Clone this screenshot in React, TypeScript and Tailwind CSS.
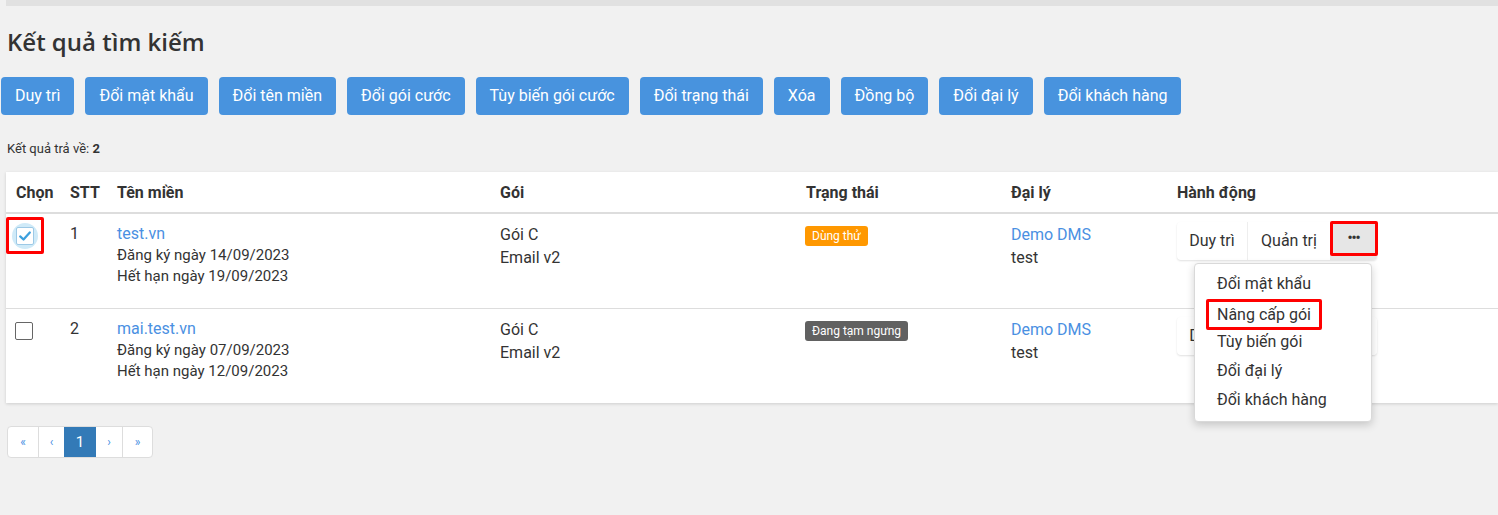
import React from 'react';

const bulkActions = [
  'Duy trì',
  'Đổi mật khẩu',
  'Đổi tên miền',
  'Đổi gói cước',
  'Tùy biến gói cước',
  'Đổi trạng thái',
  'Xóa',
  'Đồng bộ',
  'Đổi đại lý',
  'Đổi khách hàng',
];

const domains = [
  {
    id: 1,
    name: 'test.vn',
    registered: '14/09/2023',
    expires: '19/09/2023',
    status: 'Dùng thử',
    statusClass: 'bg-[#ff9800]',
    checked: true,
  },
  {
    id: 2,
    name: 'mai.test.vn',
    registered: '07/09/2023',
    expires: '12/09/2023',
    status: 'Đang tạm ngưng',
    statusClass: 'bg-[#616161]',
    checked: false,
  },
];

const menuItems = ['Đổi mật khẩu', 'Nâng cấp gói', 'Tùy biến gói', 'Đổi đại lý', 'Đổi khách hàng'];

function CheckBox({ checked }: { checked: boolean }) {
  if (checked) {
    return (
      <span className="relative inline-flex h-[37px] w-[38px] items-center justify-center border-[3px] border-[#ff0000] rounded-[2px] -ml-[9px] -mt-[6px]">
        <span className="flex h-[26px] w-[26px] items-center justify-center rounded-full bg-[#cfeaf8]">
          <span className="flex h-[18px] w-[18px] items-center justify-center rounded-[2px] border border-[#9cc9e6] bg-white">
            <svg viewBox="0 0 16 16" className="h-[14px] w-[14px]">
              <path d="M2.5 8.5 L6.3 12 L13.5 4" fill="none" stroke="#3ca0dd" strokeWidth="2.6" strokeLinecap="round" strokeLinejoin="round" />
            </svg>
          </span>
        </span>
      </span>
    );
  }
  return <span className="mt-[4px] block h-[18px] w-[18px] rounded-[2px] border border-[#666] bg-white" />;
}

function ActionGroup({ open }: { open: boolean }) {
  return (
    <div className="relative inline-flex">
      <div className="flex h-[38px] rounded-[4px] bg-white shadow-[0_1px_2px_rgba(0,0,0,0.12)]">
        <button className="w-[71px] text-[16px] text-[#333] border-r border-[#eee]">Duy trì</button>
        <button className="w-[82px] text-[16px] text-[#333]">Quản trị</button>
        <button
          className={`relative w-[47px] rounded-r-[4px] flex items-start justify-center ${open ? 'bg-[#e6e6e6]' : 'bg-white'}`}
        >
          <span className="mt-[9px] text-[14px] font-bold leading-none text-[#333] tracking-[-1px]">•••</span>
          {open && <span className="absolute left-0 top-[-1px] h-[35px] w-[48px] rounded-[2px] border-[3px] border-[#ff0000]" />}
        </button>
      </div>
      {open && (
        <div className="absolute left-[17px] top-[41px] z-10 w-[178px] rounded-[4px] border border-[#d9d9d9] bg-white py-[6px] shadow-[0_3px_8px_rgba(0,0,0,0.18)]">
          {menuItems.map((item) => (
            <div key={item} className="relative h-[29px] px-[22px] text-[16px] leading-[28px] text-[#333] whitespace-nowrap">
              {item === 'Nâng cấp gói' ? (
                <span className="relative -mx-[11px] inline-block rounded-[2px] border-[3px] border-[#ff0000] px-[8px] leading-[25px]">
                  {item}
                </span>
              ) : (
                item
              )}
            </div>
          ))}
        </div>
      )}
    </div>
  );
}

export default function App() {
  return (
    <div className="min-h-[515px] bg-[#f1f1f1] text-[#333] font-['Roboto',sans-serif]">
      <div className="ml-[6px] h-[6px] bg-[#e1e1e1]" />

      <h1 className="ml-[7px] mt-[20px] text-[24px] leading-[32px] font-semibold text-[#333] font-['Open_Sans',sans-serif]">
        Kết quả tìm kiếm
      </h1>

      {/* Bulk actions */}
      <div className="mt-[19px] ml-[1px] flex gap-[11px]">
        {bulkActions.map((label) => (
          <button
            key={label}
            className="h-[38px] rounded-[4px] bg-[#4893de] px-[14px] text-[16px] text-white whitespace-nowrap"
          >
            {label}
          </button>
        ))}
      </div>

      <div className="ml-[7px] mt-[25px] text-[13px] leading-[18px]">
        Kết quả trả về: <b>2</b>
      </div>

      {/* Results table */}
      <div className="ml-[6px] mt-[14px] bg-white shadow-[0_1px_3px_rgba(0,0,0,0.15)]">
        <table className="w-full table-fixed border-collapse text-left">
          <colgroup>
            <col className="w-[54px]" />
            <col className="w-[47px]" />
            <col className="w-[383px]" />
            <col className="w-[306px]" />
            <col className="w-[205px]" />
            <col className="w-[166px]" />
            <col />
          </colgroup>
          <thead>
            <tr className="h-[41px] border-b-2 border-[#ddd] text-[16px] font-bold">
              <th className="pl-[10px] pt-[1px]">Chọn</th>
              <th className="pl-[10px] pt-[1px]">STT</th>
              <th className="pl-[10px] pt-[1px]">Tên miền</th>
              <th className="pl-[10px] pt-[1px]">Gói</th>
              <th className="pl-[10px] pt-[1px]">Trạng thái</th>
              <th className="pl-[10px] pt-[1px]">Đại lý</th>
              <th className="pl-[10px] pt-[1px]" colSpan={2}>Hành động</th>
            </tr>
          </thead>
          <tbody>
            {domains.map((d, i) => (
              <tr key={d.id} className={`h-[95px] align-top ${i === 0 ? 'border-b border-[#ddd]' : ''}`}>
                <td className="pl-[9px] pt-[9px]">
                  <CheckBox checked={d.checked} />
                </td>
                <td className="pl-[10px] pt-[9px] text-[16px] leading-[21px]">{d.id}</td>
                <td className="pl-[10px] pt-[9px] text-[15px] leading-[21px] whitespace-nowrap">
                  <div className="mb-[1px] text-[16px] text-[#4a90e2]">{d.name}</div>
                  <div>Đăng ký ngày {d.registered}</div>
                  <div>Hết hạn ngày {d.expires}</div>
                </td>
                <td className="pl-[10px] pt-[9px] text-[16px] leading-[23px]">
                  <div>Gói C</div>
                  <div>Email v2</div>
                </td>
                <td className="pl-[9px] pt-[9px]">
                  <span className={`inline-block rounded-[3px] px-[7px] text-[12px] leading-[20px] text-white ${d.statusClass}`}>
                    {d.status}
                  </span>
                </td>
                <td className="pl-[10px] pt-[9px] text-[16px] leading-[23px]">
                  <div className="text-[#4a90e2]">Demo DMS</div>
                  <div>test</div>
                </td>
                <td className="pl-[10px] pt-[8px]" colSpan={2}>
                  <ActionGroup open={i === 0} />
                </td>
              </tr>
            ))}
          </tbody>
        </table>
      </div>

      {/* Pagination */}
      <div className="ml-[7px] mt-[23px] inline-flex h-[32px] overflow-hidden rounded-[4px] border border-[#ddd] bg-white text-[12px]">
        <span className="flex w-[30px] items-center justify-center text-[#4a90e2]">«</span>
        <span className="flex w-[26px] items-center justify-center border-l border-[#ddd] text-[#4a90e2]">‹</span>
        <span className="flex w-[32px] items-center justify-center bg-[#337ab7] text-[15px] text-white">1</span>
        <span className="flex w-[27px] items-center justify-center border-r border-[#ddd] text-[#4a90e2]">›</span>
        <span className="flex w-[29px] items-center justify-center text-[#4a90e2]">»</span>
      </div>
    </div>
  );
}
